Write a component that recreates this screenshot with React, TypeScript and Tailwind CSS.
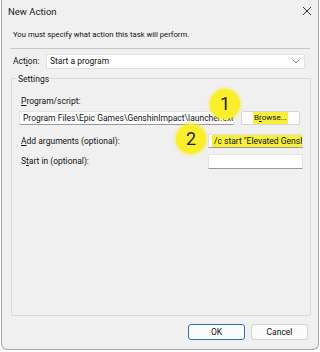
const ui = { fontFamily: "Roboto, 'Noto Sans', sans-serif" };

function Field({ className, children }: { className: string; children?: React.ReactNode }) {
  return (
    <div
      className={`flex h-[14px] items-center overflow-hidden whitespace-nowrap border border-[#e3e3e3] border-b-[#9a9a9a] bg-white px-[3px] text-[8.5px] text-[#111] ${className}`}
    >
      {children}
    </div>
  );
}

function Marker({ n, className }: { n: string; className: string }) {
  return (
    <div
      className={`absolute flex h-[30px] w-[30px] items-center justify-center rounded-full bg-[#fbee2c] text-[18px] leading-none text-[#222] shadow-[0_0_3px_1px_rgba(251,238,44,0.7)] ${className}`}
    >
      {n}
    </div>
  );
}

export default function App() {
  return (
    <div className="relative h-[352px] w-[320px] overflow-hidden bg-white" style={ui}>
      <div className="ml-[1px] flex h-[350px] w-[318px] flex-col rounded-b-[6px] border border-t-0 border-[#a9a9a9] bg-[#f0f0f0]">
        {/* title bar */}
        <div className="flex h-[24px] items-center justify-between pl-[6px] pr-[5px] text-[9.5px] text-[#1a1a1a]">
          <span>New Action</span>
          <svg width="10" height="10" viewBox="0 0 10 10" className="mr-[1px] mt-[-2px]">
            <path d="M1 1 L9 9 M9 1 L1 9" stroke="#333" strokeWidth="1" fill="none" />
          </svg>
        </div>

        <div className="px-[8px] text-[8.5px] text-[#111]">
          <p className="mt-[5px] pl-[3px] text-[7.7px] leading-[12px]">You must specify what action this task will perform.</p>
          <div className="mt-[7px] h-px bg-[#c9c9c9]" />

          <div className="mt-[5px] flex items-center">
            <span className="w-[36px] pl-[3px]">
              Act<span className="underline">i</span>on:
            </span>
            <div className="flex h-[15px] w-[259px] items-center justify-between border border-[#e2e2e2] bg-white pl-[3px] pr-[4px]">
              <span>Start a program</span>
              <svg width="8" height="5" viewBox="0 0 8 5">
                <path d="M0.5 0.5 L4 4 L7.5 0.5" stroke="#8a8a8a" strokeWidth="1" fill="none" />
              </svg>
            </div>
          </div>

          {/* settings group */}
          <div className="relative mt-[9px] ml-[1px] h-[238px] w-[300px] rounded-[2px] border border-[#dadada]">
            <span className="absolute left-[5px] top-[-6px] bg-[#f0f0f0] px-px leading-[12px]">Settings</span>

            <div className="mt-[16px] pl-[9px] leading-[12px]">
              <span className="underline">P</span>rogram/script:
            </div>
            <div className="mt-[4px] flex items-center pl-[7px]">
              <Field className="w-[215px]">Program Files\Epic Games\GenshinImpact\launcher.exe</Field>
              <button className="ml-[7px] flex h-[14px] w-[59px] items-center justify-center rounded-[2px] border border-[#d5d5d5] bg-[#fdfdfd] text-[8px]">
                <span className="bg-[#f7ef3a] px-[1px]">
                  B<span className="underline">r</span>owse...
                </span>
              </button>
            </div>

            <div className="mt-[9px] flex items-center">
              <span className="w-[196px] pl-[9px]">
                <span className="underline">A</span>dd arguments (optional):
              </span>
              <Field className="w-[95px] border-b-[#1d6fc0] px-0">
                <span className="bg-[#f7ef3a] pl-[2px]">/c start "Elevated GenshinImpact"</span>
              </Field>
            </div>

            <div className="mt-[6px] flex items-center">
              <span className="w-[196px] pl-[9px]">
                S<span className="underline">t</span>art in (optional):
              </span>
              <Field className="h-[15px] w-[95px]" />
            </div>

            <Marker n="1" className="left-[198px] top-[10px]" />
            <Marker n="2" className="left-[164px] top-[45px]" />
          </div>

          {/* buttons */}
          <div className="mt-[8px] flex justify-end gap-[6px] pr-[2px]">
            <button className="h-[16px] w-[57px] rounded-[3px] border border-[#2a73c0] bg-[#fbfbfb] text-[8.5px]">OK</button>
            <button className="h-[16px] w-[57px] rounded-[3px] border border-[#d3d3d3] bg-[#fbfbfb] text-[8.5px]">Cancel</button>
          </div>
        </div>
      </div>
    </div>
  );
}
